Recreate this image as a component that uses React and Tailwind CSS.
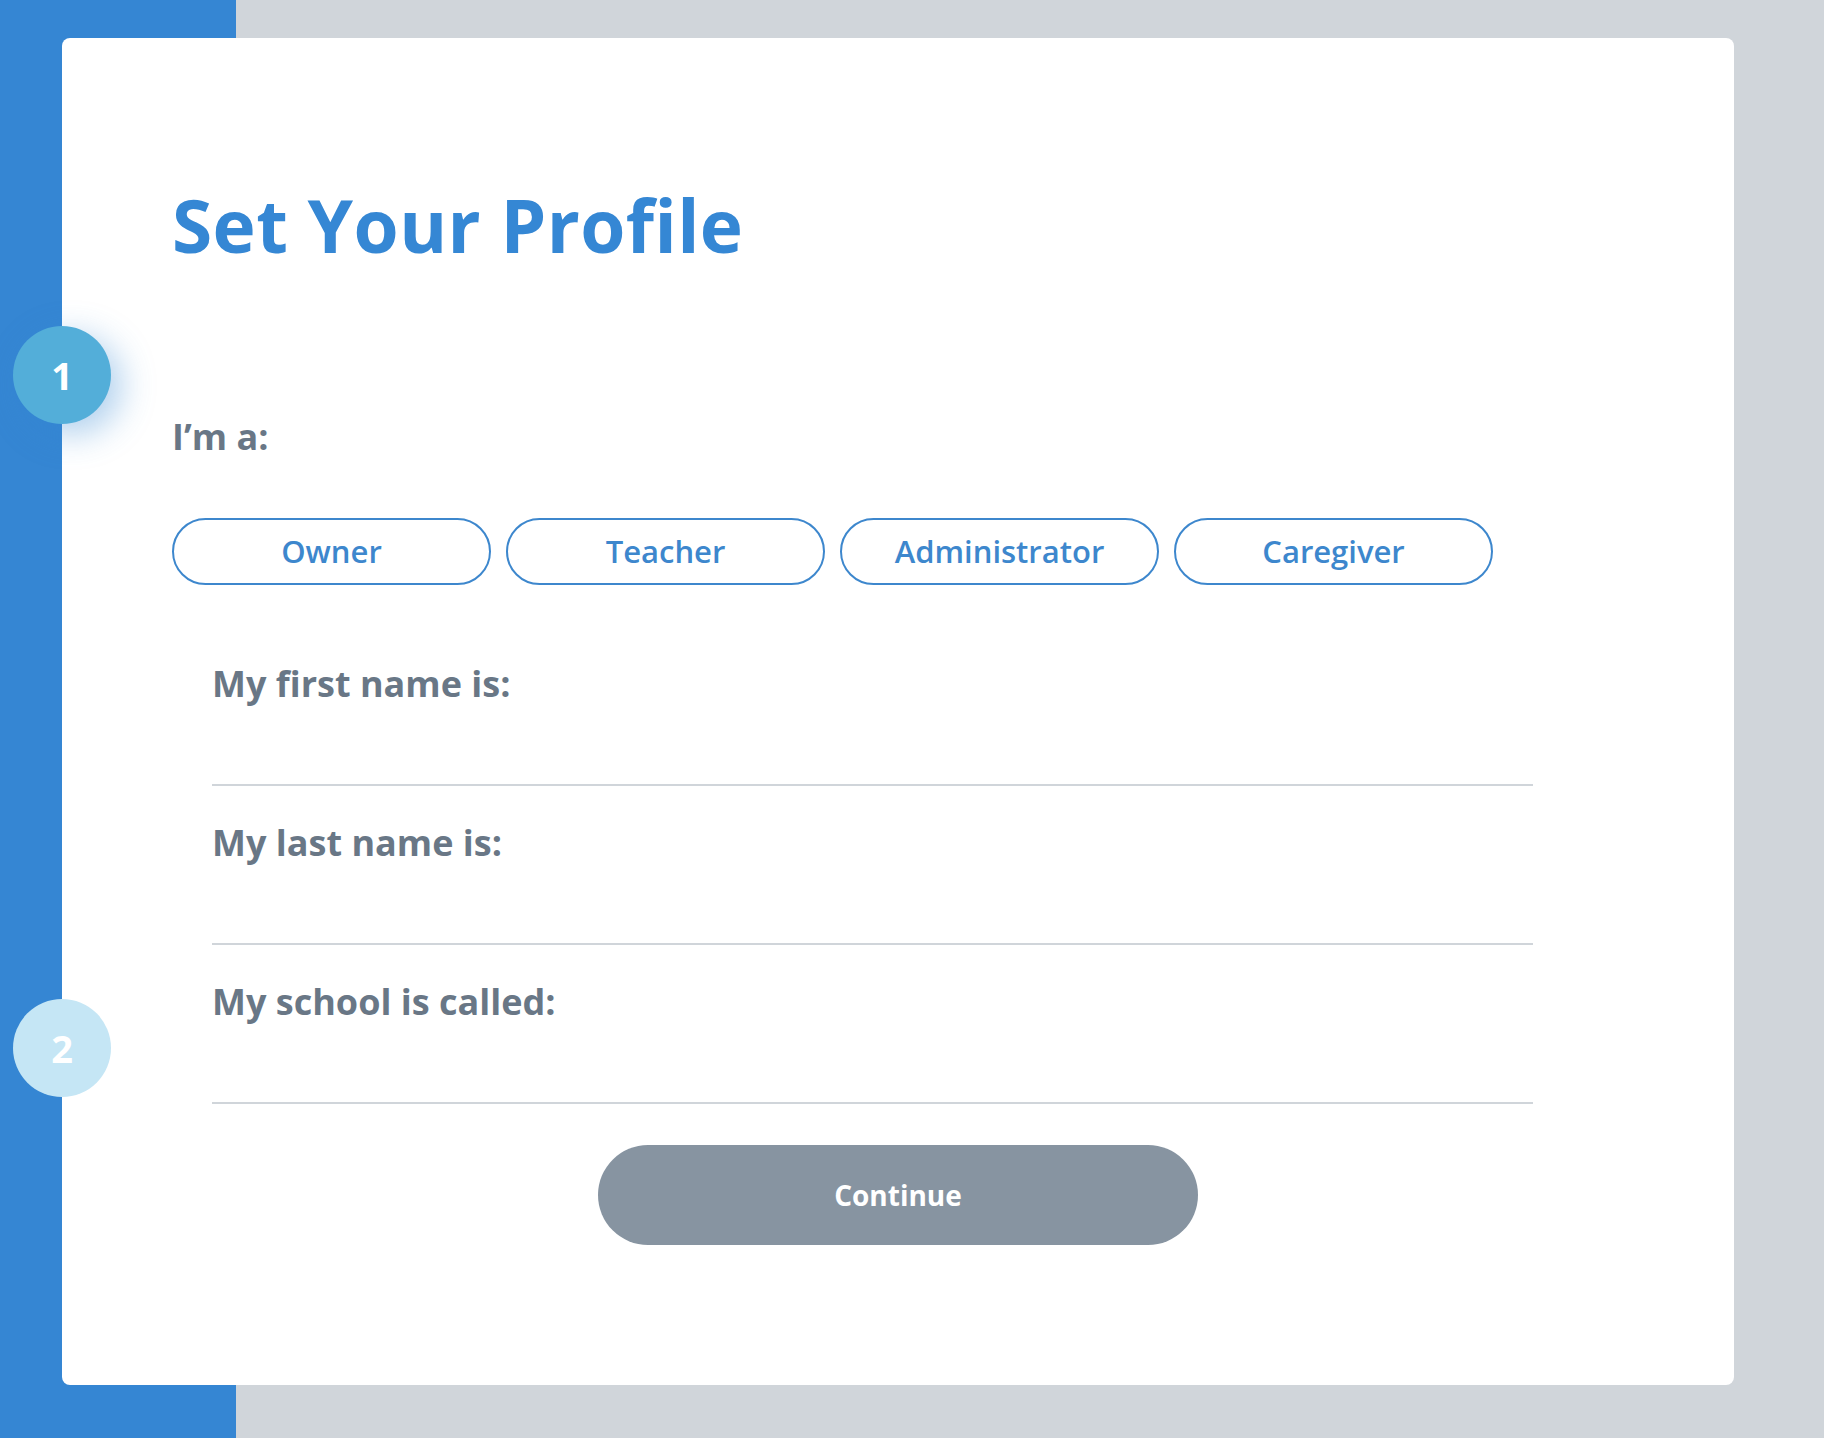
import React from "react";

const roles = ["Owner", "Teacher", "Administrator", "Caregiver"];
const fields = ["My first name is:", "My last name is:", "My school is called:"];

const font = { fontFamily: '"Open Sans", "Noto Sans", sans-serif' };

const StepDot = ({ n, className }) => (
  <div
    className={`absolute left-[-49px] w-[98px] h-[98px] rounded-full flex items-center justify-center text-white font-bold text-[38px] leading-none ${className}`}
  >
    {n}
  </div>
);

const App = () => {
  return (
    <div
      style={font}
      className="w-[1824px] h-[1438px] bg-[linear-gradient(to_right,#3586d3_236px,#d0d5da_236px)] pt-[38px] pl-[62px]"
    >
      <div className="relative w-[1672px] h-[1347px] bg-white rounded-[8px] pl-[110px] pt-[150px]">
        <StepDot
          n="1"
          className="top-[288px] bg-[#53aed9] shadow-[10px_10px_34px_rgba(53,134,211,0.4)]"
        />
        <StepDot n="2" className="top-[961px] bg-[#c5e6f5]" />

        <h1 className="text-[73px] leading-none font-bold tracking-[0.4px] text-[#3587d4]">
          Set Your Profile
        </h1>

        <p className="mt-[158px] text-[36px] leading-none font-bold text-[#697786]">
          I’m a:
        </p>

        <div className="mt-[63px] flex gap-[15px]">
          {roles.map((r) => (
            <button
              key={r}
              className="w-[319px] h-[67px] rounded-full border-2 border-[#3d87cd] text-[#3d87cd] text-[31px] font-semibold leading-none flex items-center justify-center"
            >
              {r}
            </button>
          ))}
        </div>

        <div className="mt-[81px] pl-[40px] w-[1361px] flex flex-col gap-[39px]">
          {fields.map((f) => (
            <div key={f} className="border-b-2 border-[#d0d5da] pb-[82px]">
              <p className="text-[36px] leading-none font-bold text-[#697786]">{f}</p>
            </div>
          ))}
        </div>

        <div className="mt-[41px] flex justify-center pr-[110px]">
          <button className="w-[600px] h-[100px] rounded-full bg-[#8794a1] text-white text-[28px] font-bold">
            Continue
          </button>
        </div>
      </div>
    </div>
  );
};

export default App;
